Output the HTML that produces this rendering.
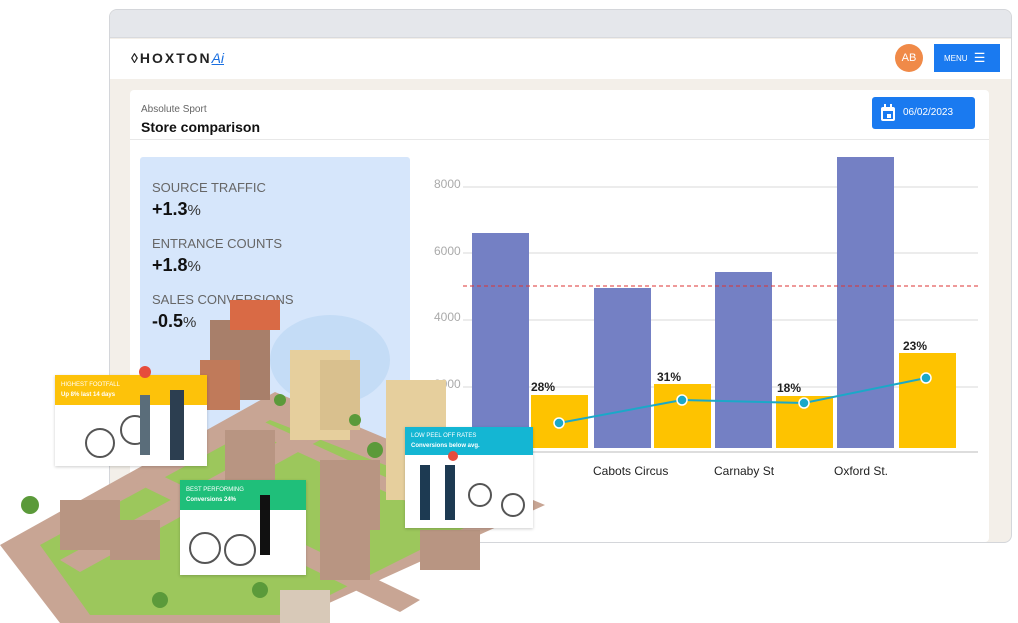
<!DOCTYPE html>
<html><head><meta charset="utf-8"><style>
*{margin:0;padding:0;box-sizing:border-box}
body{width:1018px;height:623px;background:#fff;position:relative;overflow:hidden;font-family:"Liberation Sans",sans-serif}
.abs{position:absolute}
</style></head><body>
<div class="abs" style="left:109px;top:9px;width:903px;height:534px;border:1px solid #d4d6da;border-radius:8px;background:#f3efe9;overflow:hidden">
 <div class="abs" style="left:0;top:0;width:903px;height:28px;background:#e5e7eb;border-bottom:1px solid #d8dade"></div>
 <div class="abs" style="left:0;top:29px;width:903px;height:40px;background:#fff"></div>
</div>
<div class="abs" style="left:131px;top:50px;font-size:14px;font-weight:bold;letter-spacing:2px;color:#222">◊HOXTON<span style="font-style:italic;font-weight:normal;color:#1a6fe0;text-decoration:underline;letter-spacing:0">Ai</span></div>
<div class="abs" style="left:895px;top:44px;width:28px;height:28px;border-radius:50%;background:#f08a48;color:#fff;font-size:11px;text-align:center;line-height:28px">AB</div>
<div class="abs" style="left:934px;top:44px;width:66px;height:28px;background:#1a7af0;color:#fff;font-size:8px;line-height:28px;padding-left:10px">MENU <span style="font-size:13px;vertical-align:-1px;margin-left:4px">☰</span></div>
<div class="abs" style="left:130px;top:90px;width:859px;height:452px;background:#fff;border-radius:4px"></div>
<div class="abs" style="left:130px;top:139px;width:859px;height:1px;background:#e8e8e8"></div>
<div class="abs" style="left:141px;top:104px;font-size:10px;color:#666">Absolute Sport</div>
<div class="abs" style="left:141px;top:119px;font-size:14px;font-weight:bold;color:#111">Store comparison</div>
<div class="abs" style="left:872px;top:97px;width:103px;height:32px;background:#1a7af0;border-radius:3px;color:#fff;font-size:10px;line-height:32px;padding-left:31px">06/02/2023</div>
<svg class="abs" style="left:880px;top:104px" width="16" height="18"><rect x="1" y="3" width="14" height="14" rx="2" fill="#fff"/><rect x="3" y="7" width="10" height="8" fill="#1a7af0"/><rect x="7" y="10" width="4" height="4" fill="#fff"/><rect x="4" y="0" width="2" height="4" fill="#fff"/><rect x="10" y="0" width="2" height="4" fill="#fff"/></svg>
<div class="abs" style="left:140px;top:157px;width:270px;height:300px;background:#d6e6fb;border-radius:3px"></div>
<div class="abs" style="left:152px;top:180px;font-size:13px;color:#666;line-height:15px">SOURCE TRAFFIC<br><b style="font-size:18px;color:#111;line-height:28px">+1.3</b><span style="font-size:15px;color:#333">%</span></div>
<div class="abs" style="left:152px;top:236px;font-size:13px;color:#666;line-height:15px">ENTRANCE COUNTS<br><b style="font-size:18px;color:#111;line-height:28px">+1.8</b><span style="font-size:15px;color:#333">%</span></div>
<div class="abs" style="left:152px;top:292px;font-size:13px;color:#666;line-height:15px">SALES CONVERSIONS<br><b style="font-size:18px;color:#111;line-height:28px">-0.5</b><span style="font-size:15px;color:#333">%</span></div>
<svg class="abs" style="left:0;top:0" width="1018" height="623">
 <g stroke="#d8d8d8" stroke-width="1"><line x1="463" y1="187" x2="978" y2="187"/><line x1="463" y1="253" x2="978" y2="253"/><line x1="463" y1="320" x2="978" y2="320"/><line x1="463" y1="387" x2="978" y2="387"/><line x1="463" y1="452" x2="978" y2="452" stroke="#bbb"/></g>
 <g font-family="Liberation Sans" font-size="12" fill="#aaa"><text x="434" y="188">8000</text><text x="434" y="255">6000</text><text x="434" y="321">4000</text><text x="434" y="388">2000</text></g>
 <g fill="#7480c4"><rect x="472" y="233" width="57" height="215"/><rect x="594" y="288" width="57" height="160"/><rect x="715" y="272" width="57" height="176"/><rect x="837" y="157" width="57" height="291"/></g>
 <g fill="#fec300"><rect x="531" y="395" width="57" height="53"/><rect x="654" y="384" width="57" height="64"/><rect x="776" y="396" width="57" height="52"/><rect x="899" y="353" width="57" height="95"/></g>
 <line x1="463" y1="286" x2="978" y2="286" stroke="#d33" stroke-dasharray="4,3"/>
 <polyline points="559,423 682,400 804,403 926,378" fill="none" stroke="#1ba8c8" stroke-width="2"/>
 <g fill="#1ba8c8" stroke="#fff" stroke-width="1.5"><circle cx="559" cy="423" r="5"/><circle cx="682" cy="400" r="5"/><circle cx="804" cy="403" r="5"/><circle cx="926" cy="378" r="5"/></g>
 <g font-family="Liberation Sans" font-size="12" font-weight="bold" fill="#222"><text x="531" y="391">28%</text><text x="657" y="381">31%</text><text x="777" y="392">18%</text><text x="903" y="350">23%</text></g>
 <g font-family="Liberation Sans" font-size="12" fill="#222"><text x="593" y="475">Cabots Circus</text><text x="714" y="475">Carnaby St</text><text x="834" y="475">Oxford St.</text></g>
 <!-- city -->
 <ellipse cx="330" cy="360" rx="60" ry="45" fill="#c4dcf6"/>
 <polygon points="0,545 275,392 545,505 285,623 60,623" fill="#c8a594"/>
 <polygon points="40,545 270,420 500,510 290,615 90,615" fill="#9cc75c"/>
 <g fill="#c8a594"><polygon points="60,560 300,430 320,440 80,572"/><polygon points="150,470 420,600 400,612 130,480"/><polygon points="260,420 480,520 465,528 245,428"/></g>
 <g fill="#a87f6a"><rect x="210" y="320" width="60" height="80"/><rect x="230" y="300" width="50" height="30" fill="#d96a45"/><rect x="200" y="360" width="40" height="50" fill="#c07a5a"/></g>
 <g fill="#e6cf9d"><rect x="290" y="350" width="60" height="90"/><rect x="386" y="380" width="60" height="120"/><rect x="320" y="360" width="40" height="70" fill="#d9c08e"/></g>
 <g fill="#b89582"><rect x="320" y="460" width="60" height="70"/><rect x="60" y="500" width="60" height="50"/><rect x="110" y="520" width="50" height="40"/><rect x="320" y="530" width="50" height="50"/><rect x="420" y="530" width="60" height="40"/><rect x="225" y="430" width="50" height="50"/><rect x="280" y="590" width="50" height="33" fill="#d8c9b8"/></g>
 <g fill="#5b9a3a"><circle cx="375" cy="450" r="8"/><circle cx="30" cy="505" r="9"/><circle cx="260" cy="590" r="8"/><circle cx="160" cy="600" r="8"/><circle cx="280" cy="400" r="6"/><circle cx="355" cy="420" r="6"/></g>
</svg>
<div class="abs" style="left:55px;top:375px;width:152px;height:91px;background:#fff;box-shadow:0 1px 3px rgba(0,0,0,.2)">
 <div style="height:30px;background:#fdc20a;color:#fff;font-size:6px;padding:5px 6px;line-height:10px">HIGHEST FOOTFALL<br><b>Up 8% last 14 days</b></div></div>
<div class="abs" style="left:180px;top:480px;width:126px;height:95px;background:#fff;box-shadow:0 1px 3px rgba(0,0,0,.2)">
 <div style="height:30px;background:#1fbf7a;color:#fff;font-size:6px;padding:5px 6px;line-height:10px">BEST PERFORMING<br><b>Conversions 24%</b></div></div>
<div class="abs" style="left:405px;top:427px;width:128px;height:101px;background:#fff;box-shadow:0 1px 3px rgba(0,0,0,.2)">
 <div style="height:28px;background:#14b6d3;color:#fff;font-size:6px;padding:4px 6px;line-height:10px">LOW PEEL OFF RATES<br><b>Conversions below avg.</b></div></div>
<svg class="abs" style="left:0;top:0" width="1018" height="623">
 <g stroke="#555" stroke-width="2" fill="none"><circle cx="100" cy="443" r="14"/><circle cx="135" cy="430" r="14"/><circle cx="205" cy="548" r="15"/><circle cx="240" cy="550" r="15"/><circle cx="480" cy="495" r="11"/><circle cx="513" cy="505" r="11"/></g>
 <g fill="#2c3e50"><rect x="170" y="390" width="14" height="70"/><rect x="260" y="495" width="10" height="60" fill="#111"/><rect x="420" y="465" width="10" height="55" fill="#1d3a52"/><rect x="445" y="465" width="10" height="55" fill="#1d3a52"/><rect x="140" y="395" width="10" height="60" fill="#5a6d7a"/></g>
 <g fill="#e64c3c"><circle cx="145" cy="372" r="6"/><circle cx="453" cy="456" r="5"/></g>
</svg>
</body></html>
